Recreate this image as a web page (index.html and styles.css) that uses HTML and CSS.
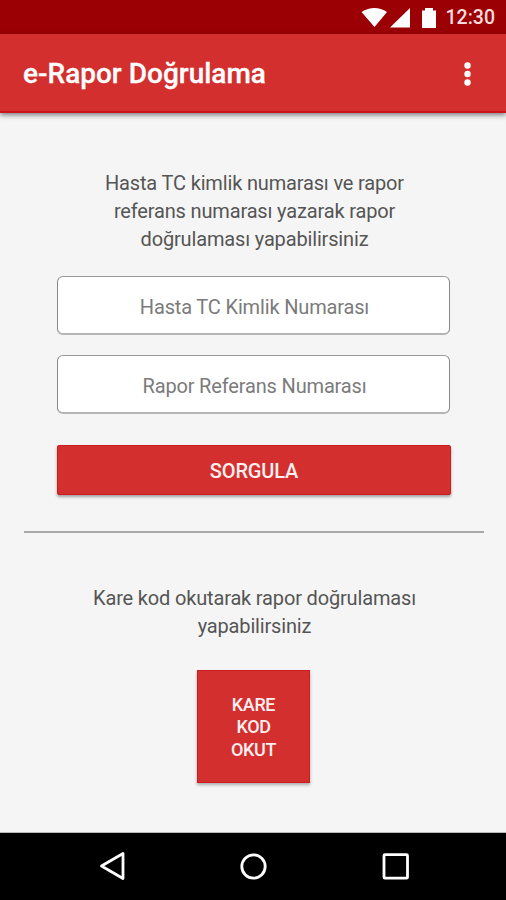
FILE: index.html
```html
<!DOCTYPE html>
<html lang="tr">
<head>
<meta charset="utf-8">
<title>e-Rapor Doğrulama</title>
<link rel="stylesheet" href="styles.css">
</head>
<body>
<div class="status">
  <svg class="status-icons" viewBox="0 0 76 34" width="76" height="34">
    <path d="M0.500 12Q13.500 4 26 12L13.500 27Z"/>
    <path d="M49 8V27.500H29Z"/>
    <path d="M61 10.500h3V8h8v2.500h3V28H61Z"/>
  </svg>
  <span class="clock">12:30</span>
</div>
<header class="appbar">
  <h1 class="title">e-Rapor Doğrulama</h1>
  <svg class="more" viewBox="0 0 8 26" width="8" height="26"><circle cx="4.500" cy="4.500" r="3.200"/><circle cx="4.500" cy="13" r="3.200"/><circle cx="4.500" cy="21.500" r="3.200"/></svg>
</header>
<main class="content">
  <p class="hint hint-form">Hasta TC kimlik numarası ve rapor<br>referans numarası yazarak rapor<br>doğrulaması yapabilirsiniz</p>
  <div class="field field-id">Hasta TC Kimlik Numarası</div>
  <div class="field field-ref">Rapor Referans Numarası</div>
  <div class="button">SORGULA</div>
  <div class="divider"></div>
  <p class="hint hint-scan">Kare kod okutarak rapor doğrulaması<br>yapabilirsiniz</p>
  <div class="scan">KARE<br>KOD<br>OKUT</div>
</main>
<nav class="navbar">
  <svg viewBox="0 0 506 67" width="506" height="67">
    <path d="M123 20.500V45.500L101.500 33Z"/><circle cx="253.500" cy="33.500" r="11.700"/><rect x="384" y="21.700" width="23.500" height="23.500" rx="1"/>
  </svg>
</nav>
</body>
</html>
```

FILE: styles.css
```css
* { box-sizing: border-box; }
body { margin: 0; width: 506px; height: 900px; display: flex; flex-direction: column; background: #f5f5f5; font-family: Roboto, sans-serif; color: #555; overflow: hidden; }
.status { height: 34px; background: #9b0005; display: flex; align-items: center; justify-content: flex-end; padding-right: 11px; gap: 9px; }
.status-icons { fill: #fff; }
.clock { font-size: 19.5px; font-weight: 500; color: #f6dcdc; padding-top: 1px; }
.appbar { height: 79px; background: #d32f2f; border-bottom: 2px solid #c9161a; display: flex; align-items: center; justify-content: space-between; padding: 2px 35px 0 23px; box-shadow: 0 2px 5px rgba(0,0,0,.5); }
.title { margin: 0; font-size: 28px; font-weight: 500; color: #fff; -webkit-text-stroke: 0.3px #fff; }
.more { fill: #fff; }
.content { flex: 1; display: flex; flex-direction: column; align-items: center; padding-left: 1px; }
.hint { margin: 0 0 0 2px; font-size: 20px; line-height: 28px; letter-spacing: -0.16px; text-align: center; }
.hint-form { margin-top: 56px; }
.field { width: 393px; height: 59px; border: 1px solid #888; border-top-color: #999; border-bottom: 2px solid #b5b5b5; border-radius: 6px; background: #fff; color: #7b7b7b; font-size: 20px; letter-spacing: -0.16px; display: flex; align-items: center; justify-content: center; padding: 4px 0 0 2px; }
.field-id { margin-top: 23px; }
.field-ref { margin-top: 20px; }
.button { margin-top: 31px; width: 394px; height: 50px; background: #d32f2f; border: 1px solid #cb1c1f; color: #fff0f0; border-radius: 2px; font-size: 20px; font-weight: 500; letter-spacing: -0.15px; display: flex; align-items: center; justify-content: center; padding: 2px 0 0 1px; box-shadow: 0 2px 3px rgba(0,0,0,.35); }
.divider { width: 460px; height: 2px; margin-top: 36px; background: #aaa; }
.hint-scan { margin-top: 51px; }
.scan { margin-top: 30px; width: 113px; height: 113px; background: #d32f2f; border: 1px solid #cb1c1f; color: #fff0f0; display: flex; align-items: center; justify-content: center; padding-top: 2px; font-size: 18px; line-height: 22.5px; font-weight: 500; letter-spacing: -0.35px; text-align: center; box-shadow: 0 2px 3px rgba(0,0,0,.3); }
.navbar { height: 67px; background: #000; box-shadow: 0 -1px 0 #bbb; }
.navbar svg { display: block; fill: none; stroke: #fff; stroke-width: 2.8; stroke-linejoin: round; }
```
